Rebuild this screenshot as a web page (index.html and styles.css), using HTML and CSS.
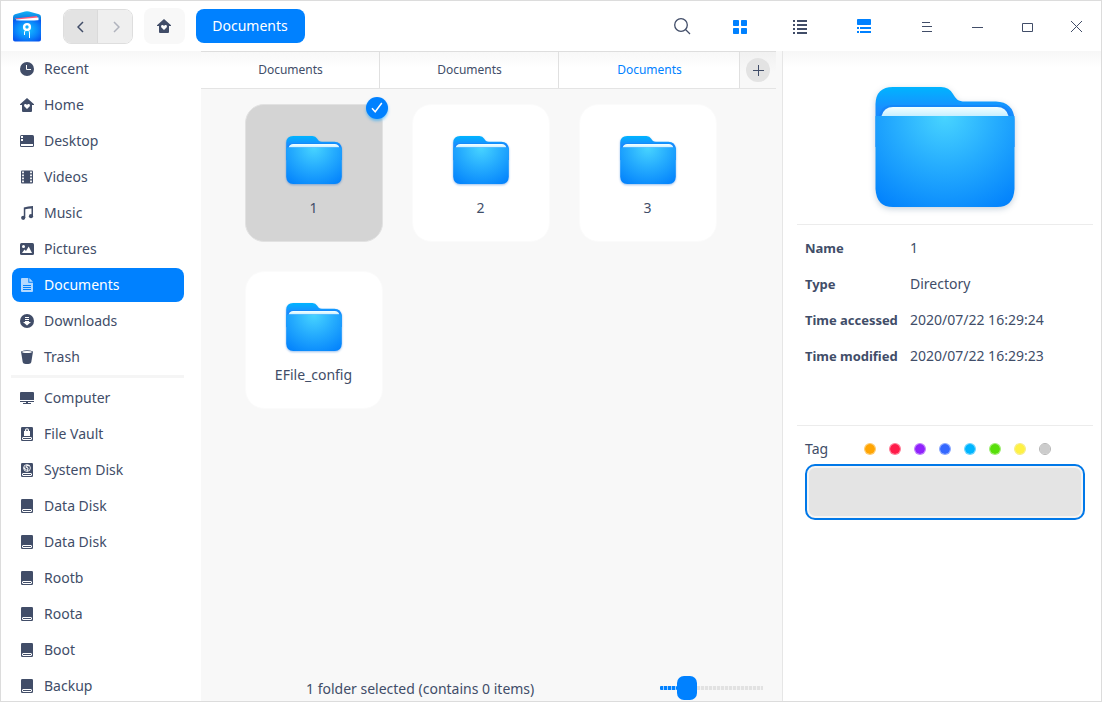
FILE: index.html
```html
<!DOCTYPE html>
<html lang="en">
<head>
<meta charset="utf-8">
<title>Documents</title>
<link rel="stylesheet" href="styles.css">
</head>
<body>
<svg class="defs" width="0" height="0" aria-hidden="true">
  <defs>
    <linearGradient id="folder-back" x1="0" y1="0" x2="0" y2="1"><stop offset="0" stop-color="#00b4ff"/><stop offset=".35" stop-color="#1890ff"/><stop offset="1" stop-color="#0a7cff"/></linearGradient>
    <radialGradient id="folder-front" gradientUnits="userSpaceOnUse" cx="70" cy="29" r="112"><stop offset="0" stop-color="#48d4ff"/><stop offset=".45" stop-color="#26adfe"/><stop offset="1" stop-color="#007ffc"/></radialGradient>
    <linearGradient id="folder-paper" x1="0" y1="0" x2="0" y2="1"><stop offset="0" stop-color="#f4ffff"/><stop offset="1" stop-color="#c8efff"/></linearGradient>
    <linearGradient id="logo-roof" x1="0" y1="0" x2="0" y2="1"><stop offset="0" stop-color="#10b4f8"/><stop offset="1" stop-color="#0c62d8"/></linearGradient>
    <radialGradient id="logo-body" cx=".5" cy=".45" r=".65"><stop offset="0" stop-color="#18c4ff"/><stop offset=".6" stop-color="#0a88fb"/><stop offset="1" stop-color="#0756ef"/></radialGradient>
    <symbol id="folder" viewBox="0 0 140 120">
      <path fill="url(#folder-back)" d="M.5 36V17Q1 0 18 0H66Q74 0 78 7C81 12 83 14.500 90 14.500H121Q138 15 139.500 32V60H.5Z"/>
      <path fill="#1468e8" opacity=".25" d="M4 29Q6 18 18 18H122Q134 18 136 29Z"/>
      <path fill="url(#folder-paper)" d="M6.500 29Q9 20 18 20H122Q131 20 133.500 29Z"/>
      <path fill="url(#folder-front)" d="M.5 29H139.500V102Q138.500 120 122 120H18Q1.500 120 .5 102Z"/>
    </symbol>
    <symbol id="home" viewBox="0 0 14 14">
      <path fill="currentColor" d="M7 0L14 6.300V7H12V13Q12 14 11 14H3Q2 14 2 13V7H0V6.300Z"/>
      <path fill="#fff" d="M7 11L4.200 8.200Q3.500 6.500 5 6Q6.300 5.700 7 6.900Q7.700 5.700 9 6Q10.500 6.500 9.800 8.200Z"/>
    </symbol>
    <symbol id="recent" viewBox="0 0 14 14"><circle cx="7" cy="7" r="7" fill="currentColor"/><path d="M6.500 3V7.500H11" fill="none" stroke="#fff"/></symbol>
    <symbol id="desktop" viewBox="0 0 14 14"><rect y="1" width="14" height="12" rx="1.500" fill="currentColor"/><path fill="#fff" d="M1 10H13V11.500Q13 12 12.500 12H1.500Q1 12 1 11.500ZM1 2H3V4H1ZM1 5H3V7H1Z"/></symbol>
    <symbol id="videos" viewBox="0 0 14 14"><rect x="1" y="0.500" width="12" height="13" rx="1" fill="currentColor"/><path fill="none" stroke="#fff" stroke-width="1.800" stroke-dasharray="1.800 1.200" d="M3 1.500V13M11 1.500V13"/></symbol>
    <symbol id="music" viewBox="0 0 14 14"><path fill="currentColor" d="M3.800 1.500Q8 .2 13 0V10.500H11.500V2.400Q8 2.500 5.300 3.300V12H3.800Z"/><circle cx="3.200" cy="11.800" r="2.100" fill="currentColor"/><circle cx="11" cy="10.200" r="2.100" fill="currentColor"/></symbol>
    <symbol id="pictures" viewBox="0 0 14 14"><rect y="1" width="14" height="12" rx="1.500" fill="currentColor"/><circle cx="3.500" cy="4.500" r="1.500" fill="#fff"/><path fill="#fff" d="M2 11L4.500 7.500L6 9L8.700 4.500L12 11Z"/></symbol>
    <symbol id="documents" viewBox="0 0 14 14"><path fill="currentColor" d="M2 0H8.300V4.700H13V13Q13 14 12 14H2Q1 14 1 13V1Q1 0 2 0ZM9.300 0L13 3.700H9.300Z"/><path fill="none" stroke="#0081ff" d="M3 7.500H11M3 9.500H11M3 11.500H11"/></symbol>
    <symbol id="downloads" viewBox="0 0 14 14"><circle cx="7" cy="7" r="7" fill="currentColor"/><path fill="#fff" d="M5 3H9V4H5ZM5 5H9V6H5ZM5 7H9V8H11L7 11.500L3 8H5Z"/></symbol>
    <symbol id="trash" viewBox="0 0 14 14"><path fill="currentColor" d="M1 1.500Q7-1 13 1.500L11.300 12Q11 13.500 9.500 13.800Q7 14.200 4.500 13.800Q3 13.500 2.700 12Z"/><ellipse cx="7" cy="2.100" rx="4.800" ry="1" fill="#fff"/></symbol>
    <symbol id="computer" viewBox="0 0 14 14"><path fill="currentColor" d="M1 1H13Q14 1 14 2V9H0V2Q0 1 1 1ZM0 10H14V11H8V12H11V13H3V12H6V11H0Z"/></symbol>
    <symbol id="disk" viewBox="0 0 14 14"><rect x="1" width="12" height="14" rx="1.300" fill="currentColor"/><rect x="2.500" y="10.500" width="9" height="2" rx=".5" fill="none" stroke="#fff"/></symbol>
    <symbol id="vault" viewBox="0 0 14 14"><use href="#disk"/><path fill="#fff" d="M4 4H5V3Q5 1.200 7 1.200Q9 1.200 9 3V4H10V9H4ZM6.200 4H7.800V3Q7.800 2.300 7 2.300Q6.200 2.300 6.200 3Z"/></symbol>
    <symbol id="system" viewBox="0 0 14 14"><use href="#disk"/><circle cx="7" cy="5" r="3.400" fill="none" stroke="#fff" stroke-width=".9"/><path fill="none" stroke="#fff" stroke-width="1.100" d="M9.500 2.800Q5.500 2.200 6.200 4.200Q9.300 4.500 7 8M4 4.500Q4.500 6.500 6.500 6.500"/></symbol>
  </defs>
</svg>

<div class="window">
  <header class="titlebar">
    <svg class="logo" width="28" height="31" viewBox="0 0 28 31">
      <path fill="url(#logo-roof)" d="M0 9V6Q0 4 2 3.300L12 .4Q14 0 16 .4L26 3.300Q28 4 28 6V11H0Z"/>
      <path fill="#ff5c7c" d="M2 7.500L24 5L25 8H2Z"/><path fill="#fff" d="M3 8.400L25.500 6.500V10H3Z"/>
      <path fill="url(#logo-body)" d="M0 9Q14 10 28 9V28.500Q28 30.500 26 30.500H2Q0 30.500 0 28.500Z"/>
      <circle cx="14" cy="16" r="2.900" fill="none" stroke="#fff" stroke-width="2.400"/>
      <path fill="none" stroke="#fff" d="M13 18.500Q12 20 11.500 21V24M15 18.500Q16.500 20 16.500 22V27"/>
    </svg>
    <div class="nav">
      <button class="nav-btn nav-back"><svg width="7" height="12" viewBox="0 0 7 12"><path d="M6 1L1 6L6 11"/></svg></button>
      <button class="nav-btn nav-next"><svg width="7" height="12" viewBox="0 0 7 12"><path d="M1 1L6 6L1 11"/></svg></button>
    </div>
    <button class="home-btn"><svg width="14" height="14"><use href="#home"/></svg></button>
    <button class="crumb">Documents</button>
    <div class="tools">
      <svg class="line search" width="17" height="17" viewBox="0 0 17 17"><circle cx="7" cy="7" r="6.300"/><path d="M11.500 11.500L16 16"/></svg>
      <svg class="accent grid-icon" width="14" height="14"><rect width="6" height="6" rx=".7"/><rect x="8" width="6" height="6" rx=".7"/><rect y="8" width="6" height="6" rx=".7"/><rect x="8" y="8" width="6" height="6" rx=".7"/></svg>
      <svg class="solid list-icon" width="14" height="14"><path d="M0 0H2V2H0ZM4 0H14V2H4ZM0 4H2V6H0ZM4 4H14V6H4ZM0 8H2V10H0ZM4 8H14V10H4ZM0 12H2V14H0ZM4 12H14V14H4Z"/></svg>
      <svg class="accent detail-icon" width="14" height="14"><rect width="14" height="6" rx=".8"/><path d="M0 8H2V10H0ZM3 8H14V10H3ZM0 12H2V14H0ZM3 12H14V14H3Z"/></svg>
      <svg class="line menu-icon" width="10" height="10"><path d="M0 .5H8M0 4.500H10M0 9.500H10"/></svg>
      <svg class="line min-icon" width="11" height="1"><path d="M0 .5H11"/></svg>
      <svg class="line max-icon" width="11" height="9"><path d="M.5 .5H10.500V8.500H.5Z"/></svg>
      <svg class="line close-icon" width="11" height="11"><path d="M0 0L11 11M11 0L0 11"/></svg>
    </div>
  </header>

  <div class="body">
    <nav class="sidebar">
      <a class="place"><svg><use href="#recent"/></svg>Recent</a>
      <a class="place"><svg><use href="#home"/></svg>Home</a>
      <a class="place"><svg><use href="#desktop"/></svg>Desktop</a>
      <a class="place"><svg><use href="#videos"/></svg>Videos</a>
      <a class="place"><svg><use href="#music"/></svg>Music</a>
      <a class="place"><svg><use href="#pictures"/></svg>Pictures</a>
      <a class="place active"><svg><use href="#documents"/></svg>Documents</a>
      <a class="place"><svg><use href="#downloads"/></svg>Downloads</a>
      <a class="place"><svg><use href="#trash"/></svg>Trash</a>
      <div class="separator"></div>
      <a class="place"><svg><use href="#computer"/></svg>Computer</a>
      <a class="place"><svg><use href="#vault"/></svg>File Vault</a>
      <a class="place"><svg><use href="#system"/></svg>System Disk</a>
      <a class="place"><svg><use href="#disk"/></svg>Data Disk</a>
      <a class="place"><svg><use href="#disk"/></svg>Data Disk</a>
      <a class="place"><svg><use href="#disk"/></svg>Rootb</a>
      <a class="place"><svg><use href="#disk"/></svg>Roota</a>
      <a class="place"><svg><use href="#disk"/></svg>Boot</a>
      <a class="place"><svg><use href="#disk"/></svg>Backup</a>
    </nav>

    <main class="content">
      <div class="tabs">
        <div class="tab">Documents</div>
        <div class="tab">Documents</div>
        <div class="tab current">Documents</div>
        <div class="add-cell"><button class="add"><svg class="line" width="11" height="11"><path d="M5.500 0V11M0 5.500H11"/></svg></button></div>
      </div>
      <div class="files">
        <div class="card selected"><svg class="folder"><use href="#folder"/></svg><span>1</span>
          <div class="check"><svg width="12" height="12" viewBox="0 0 12 12"><path d="M1 6.300L4.200 9.800L10.800 1"/></svg></div></div>
        <div class="card"><svg class="folder"><use href="#folder"/></svg><span>2</span></div>
        <div class="card"><svg class="folder"><use href="#folder"/></svg><span>3</span></div>
        <div class="card"><svg class="folder"><use href="#folder"/></svg><span>EFile_config</span></div>
      </div>
      <footer class="status">
        <span class="status-text">1 folder selected (contains 0 items)</span>
        <div class="slider"><i class="filled"></i><i class="handle"></i><i class="rest"></i></div>
      </footer>
    </main>

    <aside class="details">
      <div class="preview"><svg class="folder-large"><use href="#folder"/></svg></div>
      <dl class="info">
        <dt>Name</dt><dd>1</dd>
        <dt>Type</dt><dd>Directory</dd>
        <dt>Time accessed</dt><dd>2020/07/22 16:29:24</dd>
        <dt>Time modified</dt><dd>2020/07/22 16:29:23</dd>
      </dl>
      <section class="tags">
        <div class="tag-row"><span class="tag-label">Tag</span>
          <i class="dot orange"></i><i class="dot red"></i><i class="dot purple"></i><i class="dot blue"></i><i class="dot cyan"></i><i class="dot green"></i><i class="dot yellow"></i><i class="dot gray"></i>
        </div>
        <div class="tag-input"></div>
      </section>
    </aside>
  </div>
</div>
</body>
</html>
```
FILE: styles.css
```css
* { box-sizing: border-box; }
body { margin: 0; font: 14px/20px "Noto Sans", sans-serif; color: #414d68; }
button { border: 0; padding: 0; margin: 0; font: inherit; color: inherit; display: flex; align-items: center; justify-content: center; }
svg { display: block; flex: none; }
.defs { position: absolute; }
.window { width: 1102px; height: 702px; border: 1px solid #dcdcdc; background: #fff; display: flex; flex-direction: column; overflow: hidden; }

.titlebar { height: 50px; flex: none; display: flex; align-items: center; padding-left: 12px; }
.logo { margin-right: 22px; }
.nav { display: flex; width: 70px; height: 35px; margin: 1px 11px 0 0; border-radius: 8px; overflow: hidden; border: 1px solid #dedede; }
.nav-btn { flex: 1; background: #efefef; }
.nav-btn path { fill: none; stroke: #414d68; stroke-width: 1.5; }
.nav-back { background: #e3e3e3; border-right: 1px solid #dadada; padding-right: 1px; }
.nav-next { padding-left: 2px; }
.nav-next path { stroke: #b0b3bd; }
.home-btn { width: 41px; height: 36px; margin-right: 11px; border-radius: 8px; background: #f8f8f8; padding-right: 1px; }
.crumb { width: 109px; height: 34px; border-radius: 8px; background: #0081ff; color: #fff; padding-right: 1px; }
.tools { display: flex; align-items: center; margin-left: 369px; }
.line { fill: none; stroke: #414d68; }
.search { stroke-width: 1.3; margin-right: 42px; }
.solid { fill: #414d68; }
.accent { fill: #0081ff; }
.grid-icon, .list-icon { margin-top: 2px; }
.grid-icon { margin-right: 46px; }
.list-icon { margin-right: 50px; }
.detail-icon { margin-right: 51px; }
.menu-icon { margin: 2px 40px 0 0; }
.min-icon { margin: 3px 39px 0 0; }
.max-icon { margin: 3px 38px 0 0; }
.close-icon { margin-top: 1px; }

.body { flex: 1; min-height: 0; display: grid; grid-template-columns: 200px 581px 1fr; }
.sidebar { padding: 1px 17px 0 11px; display: flex; flex-direction: column; gap: 2px; background: linear-gradient(#f7f7f7, #fff 16px); overflow: hidden; }
.place { height: 34px; flex: none; display: flex; align-items: center; gap: 10px; padding-left: 8px; border-radius: 8px; }
.place svg { width: 14px; height: 14px; }
.active { background: #0081ff; color: #fff; }
.active svg { color: #b3d9ff; }
.separator { height: 3px; flex: none; margin: -1px 0 1px -1px; background: #f5f5f5; }

.content { background: #f8f8f8; display: flex; flex-direction: column; min-height: 0; }
.tabs { width: 575px; height: 38px; flex: none; display: grid; grid-template-columns: 179px 179px 181px 36px; border-top: 1px solid #dedede; border-bottom: 1px solid #e4e4e4; font-size: 12px; }
.tab { display: flex; align-items: center; justify-content: center; padding: 0 0 1px 1px; border-right: 1px solid #e0e0e0; background: linear-gradient(#f8f8f8, #fff 16px); }
.current { color: #0081ff; }
.add-cell { display: flex; align-items: center; justify-content: center; background: linear-gradient(#f1f1f1, #f8f8f8 20px); }
.add { width: 24px; height: 24px; border-radius: 50%; background: #e3e3e3; }
.files { flex: 1; display: grid; grid-template-columns: repeat(3, 138px); grid-auto-rows: 138px; gap: 29px; padding: 15px 0 0 44px; }
.card { position: relative; display: flex; flex-direction: column; align-items: center; padding-top: 31px; border: 1px solid #fbfbfb; border-radius: 19px; background: #fff; }
.card span { margin-top: 14px; padding-right: 1px; }
.folder { width: 56px; height: 48px; filter: drop-shadow(0 1px 1px #0060d066); }
.selected { background: #d4d4d4; border-color: #e2e2e2; }
.check { position: absolute; top: -8px; right: -6px; width: 22px; height: 22px; border-radius: 50%; background: #0081ff; box-shadow: 0 2px 3px #00a0ff80; display: flex; align-items: center; justify-content: center; }
.check path { fill: none; stroke: #fff; stroke-width: 1.5; }
.status { height: 26px; flex: none; display: flex; align-items: center; padding-left: 104px; }
.status-text { width: 355px; padding: 2px 0 0 1px; }
.slider { display: flex; align-items: center; }
.filled, .rest { height: 4px; background: repeating-linear-gradient(90deg, #0081ff 0 3px, #9fcfff 3px 4px); }
.filled { width: 17px; border-radius: 1px; }
.handle { width: 20px; height: 24px; border-radius: 7px; background: #0081ff; }
.rest { width: 66px; background: repeating-linear-gradient(90deg, #e2e2e2 0 3px, #f4f4f4 3px 4px); }

.details { border-left: 1px solid #e6e6e6; padding: 0 8px 0 14px; background: linear-gradient(#f7f7f7, #fff 16px); }
.preview { height: 174px; padding: 36px 0 0 78px; border-bottom: 1px solid #ececec; }
.folder-large { width: 140px; height: 120px; filter: drop-shadow(0 2px 3px #00306038); }
.info { height: 200px; margin: 0; padding: 5px 8px; display: grid; grid-template-columns: 105px 1fr; grid-auto-rows: 36px; align-items: center; align-content: start; }
.info dt { font-size: 13px; font-weight: 700; white-space: nowrap; letter-spacing: -.03px; }
.info dd { margin: 0; }
.tags { border-top: 1px solid #ececec; padding: 13px 8px 0; }
.tag-row { display: flex; align-items: center; gap: 13px; height: 20px; }
.tag-label { width: 46px; }
.dot { width: 12px; height: 12px; margin-bottom: 1px; border-radius: 50%; border: 1px solid #0000000d; background-clip: padding-box; }
.orange { background-color: #ffa503; border-color: #ffa50399; }
.red { background-color: #ff1c49; border-color: #ff1c4999; }
.purple { background-color: #9023fc; border-color: #9023fc99; }
.blue { background-color: #3468ff; border-color: #3468ff99; }
.cyan { background-color: #00b5ff; border-color: #00b5ff99; }
.green { background-color: #58df0a; border-color: #58df0a99; }
.yellow { background-color: #fef144; border-color: #f0e03099; }
.gray { background-color: #cccccc; border-color: #b4b4b4; }
.tag-input { height: 56px; margin-top: 5px; border: 2px solid #0078e8; border-radius: 10px; background: #e4e4e4; box-shadow: inset 0 0 0 2px #f4f4f4; }
```
